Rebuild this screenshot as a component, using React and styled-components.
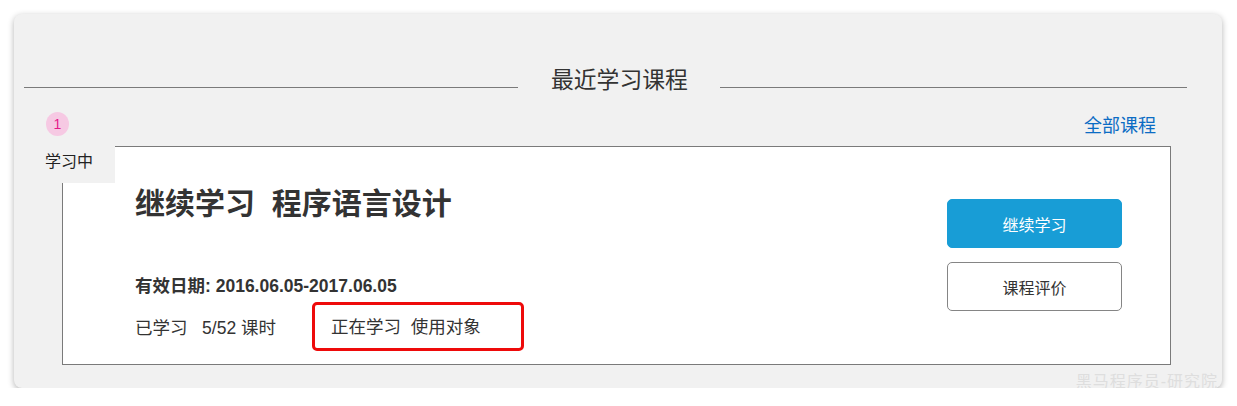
import React from 'react';
import styled, { createGlobalStyle } from 'styled-components';

//Styles
const GlobalStyle = createGlobalStyle`
  body {
    margin: 0;
    background: #fff;
    font-family: "Liberation Sans", "Noto Sans CJK SC", sans-serif;
    color: #333;
  }
  * {
    box-sizing: border-box;
  }
`;

const Page = styled.div`
  padding: 14px 15px 0 14px;
`;

const Panel = styled.section`
  position: relative;
  height: 374px;
  padding: 51px 35px 0 10px;
  background-color: #f1f1f1;
  border-radius: 8px;
  box-shadow: 0 2px 6px rgba(0, 0, 0, 0.3);
`;

const HeadRow = styled.div`
  display: flex;
  align-items: center;
  height: 30px;
`;

const Line = styled.div`
  flex: ${p => (p.wide ? '0 0 494px' : '1')};
  margin-top: 14px;
  border-top: 1px solid #7a7a7a;
`;

const Heading = styled.h2`
  margin: 0 32px 0 33px;
  font-size: 22.8px;
  line-height: 30px;
  font-weight: normal;
  color: #333;
`;

const Section = styled.div`
  margin: 0 16px 0 8px;
`;

const TopBar = styled.div`
  display: flex;
  justify-content: space-between;
  align-items: center;
  height: 51px;
  padding-top: 7px;
`;

const Badge = styled.span`
  display: flex;
  align-items: center;
  justify-content: center;
  width: 23px;
  height: 24px;
  margin-left: 14px;
  border-radius: 50%;
  background-color: #f6c9e3;
  color: #e5198a;
  font-size: 14px;
`;

const AllLink = styled.a`
  margin-right: 15px;
  font-size: 18px;
  color: #0b6cc4;
  text-decoration: none;
`;

const Card = styled.div`
  position: relative;
  display: flex;
  height: 219px;
  margin-left: 30px;
  background-color: #fff;
  border: 1px solid #7a7a7a;
`;

const Tab = styled.div`
  position: absolute;
  left: -31px;
  top: -1px;
  width: 83px;
  height: 37px;
  padding: 5px 0 0 13px;
  background-color: #f1f1f1;
  font-size: 16px;
  line-height: 22px;
  color: #222;
`;

const Info = styled.div`
  flex: 1;
  padding: 37px 0 0 72px;
`;

const Title = styled.h3`
  margin: 0;
  font-size: 30px;
  line-height: 40px;
  font-weight: bold;
  color: #333;
`;

const Dates = styled.p`
  margin: 51px 0 0;
  font-size: 17.5px;
  line-height: 22px;
  font-weight: bold;
  color: #333;
`;

const Progress = styled.div`
  display: flex;
  align-items: center;
  height: 49px;
  margin-top: 5px;
  font-size: 17.5px;
  color: #333;
`;

const Mark = styled.div`
  display: flex;
  align-items: center;
  width: 212px;
  height: 49px;
  margin-left: 36px;
  padding: 0 0 2px 16px;
  border: 3px solid #ee0a0a;
  border-radius: 5px;
`;

const Actions = styled.div`
  display: flex;
  flex-direction: column;
  gap: 14px;
  padding-top: 52px;
  margin-right: 48px;
`;

const Button = styled.button`
  width: 175px;
  height: 49px;
  border-radius: 5px;
  border: 1px solid ${p => (p.primary ? '#189dd6' : '#858585')};
  background-color: ${p => (p.primary ? '#189dd6' : '#fff')};
  color: ${p => (p.primary ? '#fff' : '#333')};
  font-family: "Liberation Sans", "Noto Sans CJK SC", sans-serif;
  font-size: 16px;
`;

const Watermark = styled.span`
  position: absolute;
  right: 4px;
  bottom: -4px;
  font-size: 16px;
  letter-spacing: 1px;
  color: #dedede;
`;

//Component
export default function App() {
  return (
    <Page>
      <GlobalStyle />
      <Panel>
        <HeadRow>
          <Line wide />
          <Heading>最近学习课程</Heading>
          <Line />
        </HeadRow>

        <Section>
          <TopBar>
            <Badge>1</Badge>
            <AllLink href="#">全部课程</AllLink>
          </TopBar>

          <Card>
            <Tab>学习中</Tab>
            <Info>
              <Title>继续学习&nbsp;&nbsp;程序语言设计</Title>
              <Dates>有效日期: 2016.06.05-2017.06.05</Dates>
              <Progress>
                <span>已学习&nbsp;&nbsp;&nbsp;5/52 课时</span>
                <Mark>正在学习&nbsp;&nbsp;使用对象</Mark>
              </Progress>
            </Info>
            <Actions>
              <Button primary>继续学习</Button>
              <Button>课程评价</Button>
            </Actions>
          </Card>
        </Section>

        <Watermark>黑马程序员-研究院</Watermark>
      </Panel>
    </Page>
  );
}
